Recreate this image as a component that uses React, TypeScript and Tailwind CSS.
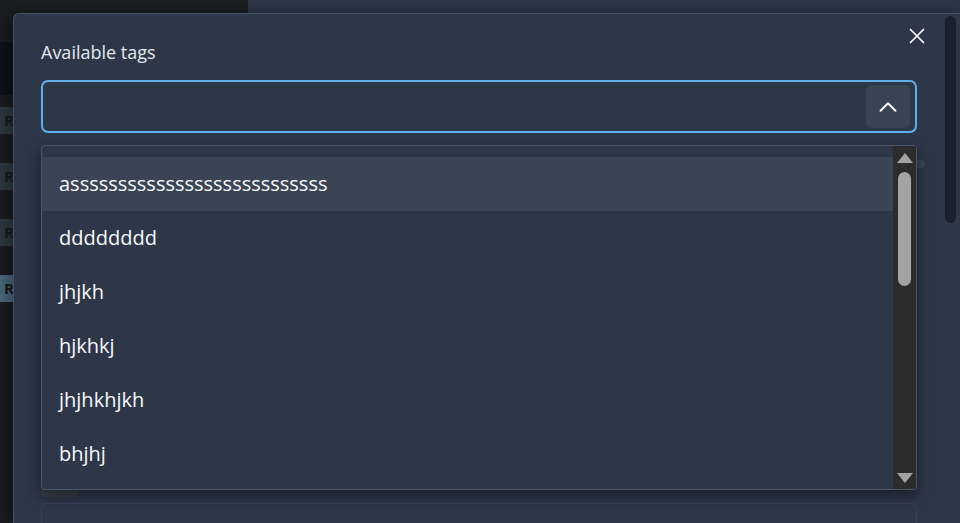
import { X, ChevronUp } from "lucide-react";

const TAGS = [
  "asssssssssssssssssssssssssss",
  "dddddddd",
  "jhjkh",
  "hjkhkj",
  "jhjhkhjkh",
  "bhjhj",
];

function SidebarChip({ tone }: { tone: "muted" | "active" }) {
  return (
    <div
      className={`h-[27px] w-[120px] flex items-center pl-[4px] text-[15px] font-bold text-[#171a20] ${
        tone === "active" ? "bg-[#4b6a7e]" : "bg-[#2c3a40]"
      }`}
    >
      R
    </div>
  );
}

function TagMenu() {
  return (
    <div className="absolute left-[27px] top-[131px] w-[876px] h-[345px] flex bg-[#2d3748] border border-[#4a5568] rounded-[4px] overflow-hidden shadow-[0_6px_14px_rgba(0,0,0,0.45)]">
      <ul className="flex-1 pt-[11px]">
        {TAGS.map((tag, i) => (
          <li
            key={tag}
            className={`h-[54px] flex items-center pl-[17px] text-[20px] text-[#f7fafc] ${
              i === 0 ? "bg-[#3a4455]" : ""
            }`}
          >
            {tag}
          </li>
        ))}
      </ul>
      {/* native-looking scrollbar */}
      <div className="w-[23px] bg-[#2c2c2c] flex flex-col items-center pt-[7px] pb-[6px]">
        <div className="w-0 h-0 border-l-[8px] border-r-[8px] border-b-[10px] border-l-transparent border-r-transparent border-b-[#a3a3a3]" />
        <div className="mt-[9px] w-[13px] h-[114px] rounded-full bg-[#a3a3a3]" />
        <div className="flex-1" />
        <div className="w-0 h-0 border-l-[8px] border-r-[8px] border-t-[10px] border-l-transparent border-r-transparent border-t-[#a3a3a3]" />
      </div>
    </div>
  );
}

export default function App() {
  return (
    <div className="relative w-[960px] h-[523px] overflow-hidden flex bg-[#1c1d21] font-['Open_Sans',sans-serif]">
      {/* page behind the modal */}
      <aside className="w-[248px] flex flex-col bg-[#1c1d21]">
        <div className="h-[42px]" />
        <div className="h-[53px] bg-[#0e1119]" />
        <div className="flex flex-col gap-[29px] pt-[12px]">
          <SidebarChip tone="muted" />
          <SidebarChip tone="muted" />
          <SidebarChip tone="muted" />
          <SidebarChip tone="active" />
        </div>
      </aside>
      <main className="flex-1 bg-[#2d3748]" />

      {/* modal */}
      <div className="absolute left-[13px] top-[13px] right-0 bottom-0 bg-[#2d3748] border-t border-l border-[#465063] rounded-tl-[6px] shadow-[-6px_0_16px_rgba(0,0,0,0.35)]">
        <button className="absolute top-[9px] right-[30px] w-[26px] h-[26px] flex items-center justify-center text-white">
          <X size={26} strokeWidth={1.6} />
        </button>
        <div className="absolute right-[4px] top-[2px] w-[11px] h-[207px] rounded-full bg-[#1b212c]" />

        <div className="pl-[27px] pt-[26px] w-[903px]">
          <label className="block h-[24px] leading-[24px] text-[18px] font-medium text-[#e2e8f0]">
            Available tags
          </label>
          <div className="mt-[16px] h-[53px] border-2 border-[#5fb0ea] rounded-[7px] flex items-center justify-end pr-[5px]">
            <div className="w-[44px] h-[43px] rounded-[6px] bg-[#3a4354] flex items-center justify-center text-white">
              <ChevronUp size={30} strokeWidth={1.5} />
            </div>
          </div>

          <div className="mt-[27px] h-[8px] ml-[830px] -mr-[8px] rounded-full bg-[#3a4455]" />
          <div className="mt-[319px] w-[37px] h-[10px] rounded-b-[4px] bg-[#383f4c]" />
          <div className="mt-[6px] h-[40px] border border-[#394254] rounded-[6px]" />
        </div>

        <TagMenu />
      </div>
    </div>
  );
}
